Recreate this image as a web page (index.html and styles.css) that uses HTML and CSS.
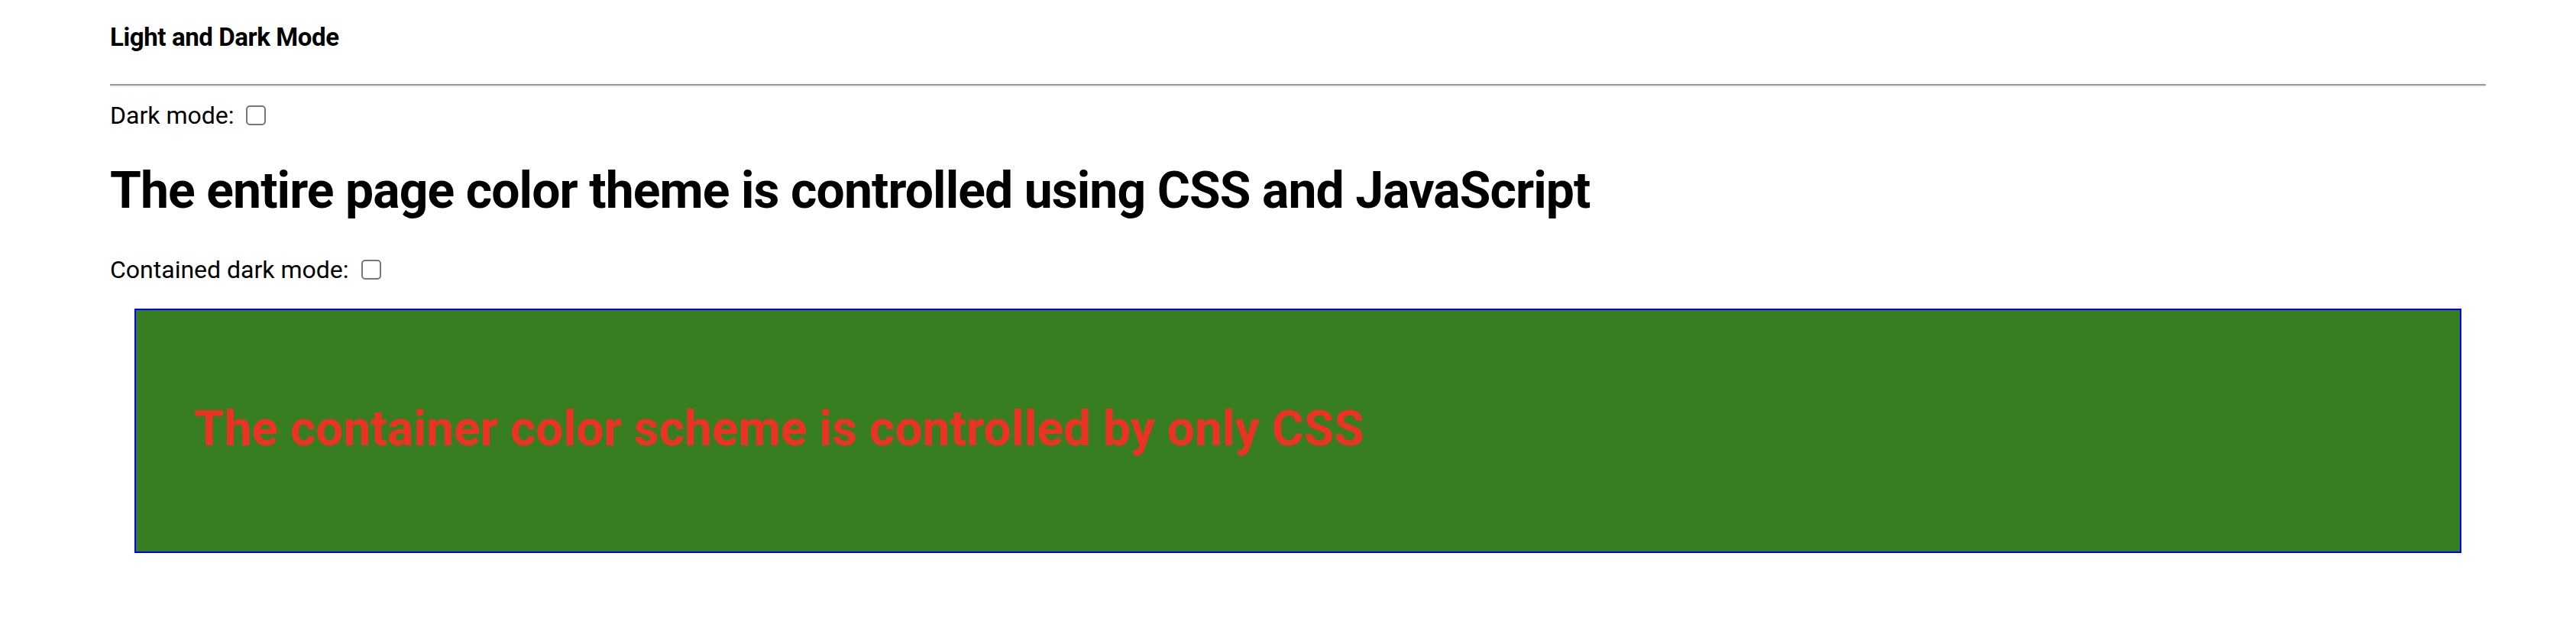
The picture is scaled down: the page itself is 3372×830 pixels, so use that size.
FILE: index.html
```html
<!DOCTYPE html>
<html lang="en">
<head>
<meta charset="utf-8">
<title>Light and Dark Mode</title>
<link rel="stylesheet" href="styles.css">
</head>
<body>
  <header class="page-header">
    <h4 class="page-title">Light and Dark Mode</h4>
  </header>
  <hr class="rule">
  <label class="toggle">Dark mode: <input type="checkbox" class="check"></label>
  <h1 class="headline">The entire page color theme is controlled using CSS and JavaScript</h1>
  <label class="toggle toggle-contained">Contained dark mode: <input type="checkbox" class="check"></label>
  <section class="scheme-box">
    <h2 class="scheme-text">The container color scheme is controlled by only CSS</h2>
  </section>
</body>
</html>
```

FILE: styles.css
```css
html, body {
  margin: 0;
  padding: 0;
  background: #ffffff;
}

body {
  font-family: Roboto, "Liberation Sans", sans-serif;
  color: #000000;
  padding: 29px 118px 0 144px;
}

.page-header {
  display: flex;
}

.page-title {
  margin: 0;
  font-size: 33px;
  font-weight: 700;
  letter-spacing: -0.4px;
  line-height: 40px;
}

.rule {
  margin: 41px 0 0 0;
  height: 0;
  border: 0;
  border-top: 2px solid #9a9a9a;
  border-bottom: 2px solid #eeeeee;
}

.toggle {
  display: block;
  font-size: 32px;
  line-height: 38px;
  margin-top: 18px;
}

.check {
  appearance: none;
  -webkit-appearance: none;
  width: 26px;
  height: 26px;
  margin: 0 0 0 8px;
  border: 2px solid #767676;
  border-radius: 5px;
  background: #ffffff;
  vertical-align: -2px;
  box-sizing: border-box;
}

.headline {
  margin: 39px 0 0 0;
  font-size: 66px;
  font-weight: 700;
  letter-spacing: -0.9px;
  line-height: 82px;
}

.toggle-contained {
  margin-top: 43px;
}

.scheme-box {
  margin: 32px 32px 0 32px;
  border: 2px solid #0000f5;
  background: #377e22;
  padding: 117px 76px 122px;
}

.scheme-text {
  margin: 0;
  color: #ea3323;
  font-size: 64px;
  font-weight: 700;
  line-height: 77px;
}
```
